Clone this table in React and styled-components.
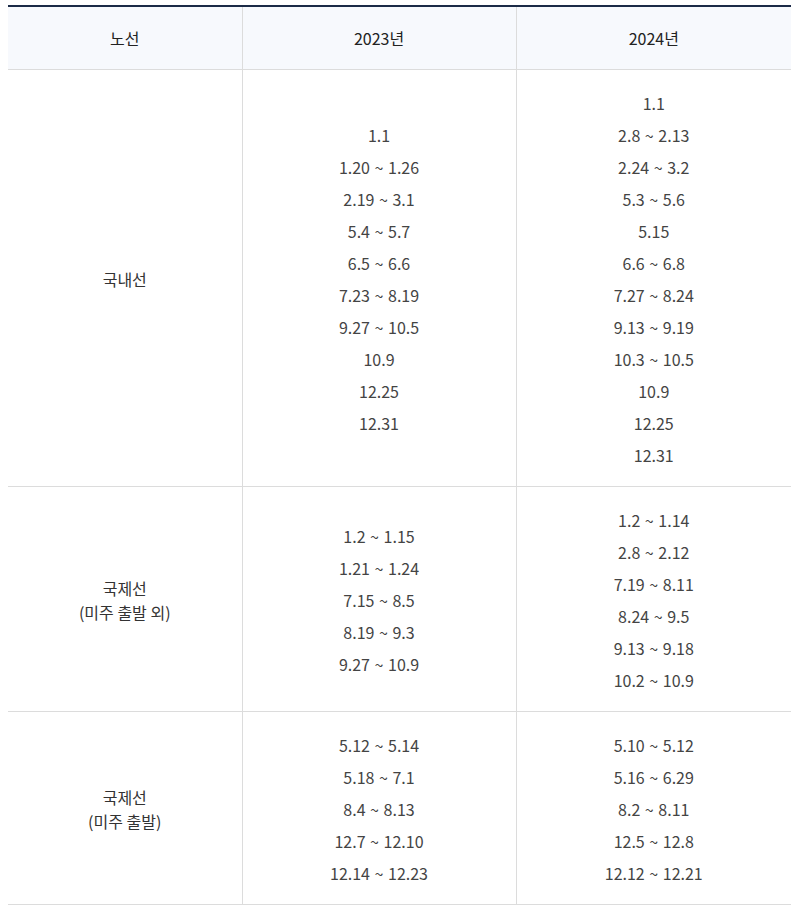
import React from 'react';
import styled, { createGlobalStyle } from 'styled-components';

const GlobalStyle = createGlobalStyle`
  body {
    margin: 0;
    padding: 5px 7px 0 8px;
    background: #fff;
    font-family: "Noto Sans CJK KR", "Noto Sans", sans-serif;
  }
`;

const Table = styled.table`
  width: 783px;
  border-collapse: collapse;
  border-top: 2px solid #1b2a47;
  table-layout: fixed;
`;

const HeadCell = styled.th`
  height: 62px;
  padding: 0;
  background: #f7f9fd;
  border-bottom: 1px solid #dcdcdc;
  border-left: 1px solid #dcdcdc;
  color: #222;
  font-size: 16px;
  font-weight: 400;
  text-align: center;
  vertical-align: middle;

  &:first-child {
    border-left: none;
  }
`;

const Cell = styled.td`
  padding: 17px 0 15px;
  border-bottom: 1px solid #dcdcdc;
  border-left: 1px solid #dcdcdc;
  color: #444;
  font-size: 16px;
  text-align: center;
  vertical-align: middle;

  &:first-child {
    border-left: none;
  }
`;

const Label = styled.div`
  line-height: 24px;
  color: #333;
`;

const DateLine = styled.div`
  line-height: 32px;
  word-spacing: 1px;
`;

const rows = [
  {
    label: ['국내선'],
    y2023: ['1.1', '1.20 ~ 1.26', '2.19 ~ 3.1', '5.4 ~ 5.7', '6.5 ~ 6.6', '7.23 ~ 8.19', '9.27 ~ 10.5', '10.9', '12.25', '12.31'],
    y2024: ['1.1', '2.8 ~ 2.13', '2.24 ~ 3.2', '5.3 ~ 5.6', '5.15', '6.6 ~ 6.8', '7.27 ~ 8.24', '9.13 ~ 9.19', '10.3 ~ 10.5', '10.9', '12.25', '12.31'],
  },
  {
    label: ['국제선', '(미주 출발 외)'],
    y2023: ['1.2 ~ 1.15', '1.21 ~ 1.24', '7.15 ~ 8.5', '8.19 ~ 9.3', '9.27 ~ 10.9'],
    y2024: ['1.2 ~ 1.14', '2.8 ~ 2.12', '7.19 ~ 8.11', '8.24 ~ 9.5', '9.13 ~ 9.18', '10.2 ~ 10.9'],
  },
  {
    label: ['국제선', '(미주 출발)'],
    y2023: ['5.12 ~ 5.14', '5.18 ~ 7.1', '8.4 ~ 8.13', '12.7 ~ 12.10', '12.14 ~ 12.23'],
    y2024: ['5.10 ~ 5.12', '5.16 ~ 6.29', '8.2 ~ 8.11', '12.5 ~ 12.8', '12.12 ~ 12.21'],
  },
];

const Dates = ({ items }) => items.map((d) => <DateLine key={d}>{d}</DateLine>);

const App = () => {
  return (
    <>
      <GlobalStyle />
      <Table>
        <colgroup>
          <col style={{ width: 234 }} />
          <col style={{ width: 274 }} />
          <col style={{ width: 275 }} />
        </colgroup>
        <thead>
          <tr>
            <HeadCell>노선</HeadCell>
            <HeadCell>2023년</HeadCell>
            <HeadCell>2024년</HeadCell>
          </tr>
        </thead>
        <tbody>
          {rows.map((row) => (
            <tr key={row.label.join()}>
              <Cell>
                {row.label.map((l) => (
                  <Label key={l}>{l}</Label>
                ))}
              </Cell>
              <Cell>
                <Dates items={row.y2023} />
              </Cell>
              <Cell>
                <Dates items={row.y2024} />
              </Cell>
            </tr>
          ))}
        </tbody>
      </Table>
    </>
  );
};

export default App;
